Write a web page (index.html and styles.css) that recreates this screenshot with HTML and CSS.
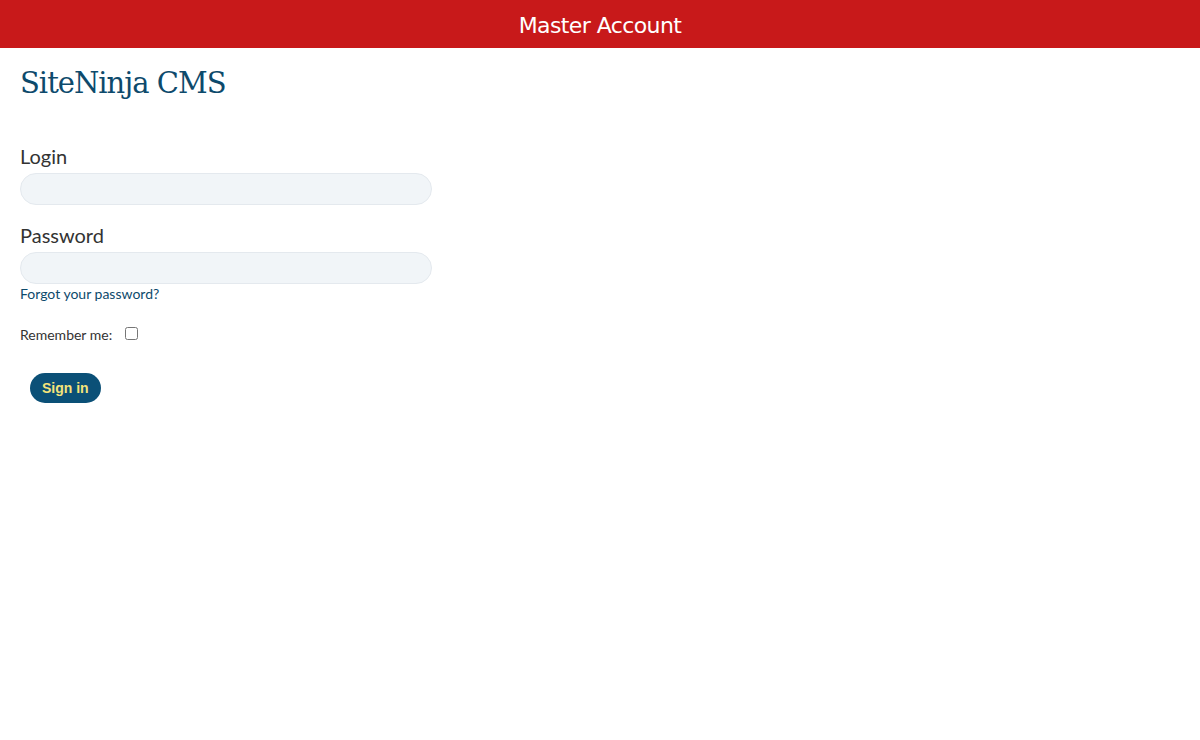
FILE: index.html
```html
<!DOCTYPE html>
<html lang="en">
<head>
<meta charset="utf-8">
<title>SiteNinja CMS - Master Account</title>
<link rel="stylesheet" href="styles.css">
</head>
<body>
<header class="topbar">Master Account</header>
<main class="content">
  <h1 class="brand">SiteNinja CMS</h1>
  <form class="login-form">
    <div class="field">
      <label class="field-label" for="login">Login</label>
      <input class="field-input" id="login" type="text">
    </div>
    <div class="field">
      <label class="field-label" for="password">Password</label>
      <input class="field-input" id="password" type="password">
      <a class="forgot" href="#">Forgot your password?</a>
    </div>
    <div class="remember">
      <label class="remember-label" for="remember">Remember me:</label>
      <input class="remember-box" id="remember" type="checkbox">
    </div>
    <div class="actions">
      <button class="signin" type="button">Sign in</button>
    </div>
  </form>
</main>
</body>
</html>
```
FILE: styles.css
```css
html, body {
  margin: 0;
  padding: 0;
  background: #ffffff;
}
body {
  font-family: Lato, "Open Sans", sans-serif;
  color: #333333;
}
.topbar {
  height: 48px;
  background: #c8191a;
  color: #ffffff;
  font-family: "DejaVu Sans", Verdana, sans-serif;
  font-size: 22px;
  line-height: 51px;
  text-align: center;
  letter-spacing: -0.6px;
}
.content {
  padding: 0 20px;
}
.brand {
  margin: 16px 0 0;
  font-family: "DejaVu Serif", Georgia, serif;
  font-weight: normal;
  font-size: 29px;
  line-height: 38px;
  color: #0d4a6c;
  letter-spacing: -1px;
}
.login-form {
  margin-top: 42px;
  width: 412px;
  display: flex;
  flex-direction: column;
}
.field {
  display: flex;
  flex-direction: column;
  margin-bottom: 18px;
}
.field-label {
  font-size: 20px;
  line-height: 24px;
  color: #333333;
  margin-bottom: 5px;
}
.field-input {
  box-sizing: border-box;
  height: 32px;
  width: 412px;
  border: 1px solid #e4e9ee;
  border-radius: 16px;
  background: #f1f5f8;
  outline: none;
  padding: 0 14px;
}
.field:nth-child(2) {
  margin-bottom: 0;
}
.forgot {
  margin-top: 1px;
  font-size: 14px;
  line-height: 17px;
  color: #0d4a6c;
  text-decoration: none;
}
.remember {
  display: flex;
  align-items: center;
  margin-top: 24px;
  font-size: 14px;
  line-height: 17px;
}
.remember-label {
  color: #333333;
}
.remember-box {
  margin: 0 0 3px 13px;
  width: 13px;
  height: 13px;
}
.actions {
  margin-top: 30px;
  padding-left: 10px;
}
.signin {
  height: 30px;
  padding: 0 12px;
  border: none;
  border-radius: 15px;
  background: #0b5077;
  color: #f5e47a;
  font-family: "Liberation Sans", Arial, sans-serif;
  font-weight: bold;
  font-size: 14px;
}
```
